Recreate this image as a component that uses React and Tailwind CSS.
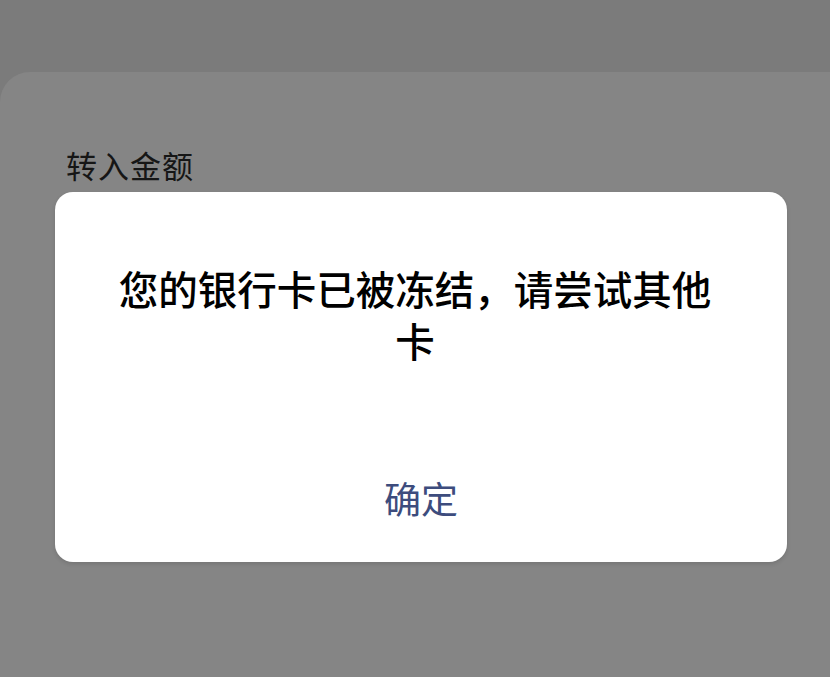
export default function App() {
  return (
    <main
      className="h-[677px] w-[830px] overflow-hidden bg-[#7b7b7b] flex flex-col"
      style={{ fontFamily: '"Noto Sans CJK SC", "Noto Sans", sans-serif' }}
    >
      <div className="h-[72px] shrink-0" />
      <section className="flex-1 bg-[#858585] rounded-tl-[30px] px-[55px] pt-[73px]">
        <div className="pl-[11px] text-[31px] leading-[40px] text-[#161616] tracking-[1px]">
          转入金额
        </div>
        <div className="mt-[7px] w-[732px] h-[370px] bg-white rounded-[18px] shadow-[0_2px_4px_rgba(0,0,0,0.12)] flex flex-col">
          <p className="pt-[70px] pl-[50px] pr-[62px] text-center text-[39.5px] leading-[52px] font-medium text-black">
            您的银行卡已被冻结，请尝试其他卡
          </p>
          <div className="flex-1 flex items-center justify-center pt-[72px]">
            <button className="text-[37px] leading-[44px] text-[#3d4c7d] pb-[4px]">
              确定
            </button>
          </div>
        </div>
      </section>
    </main>
  );
}
